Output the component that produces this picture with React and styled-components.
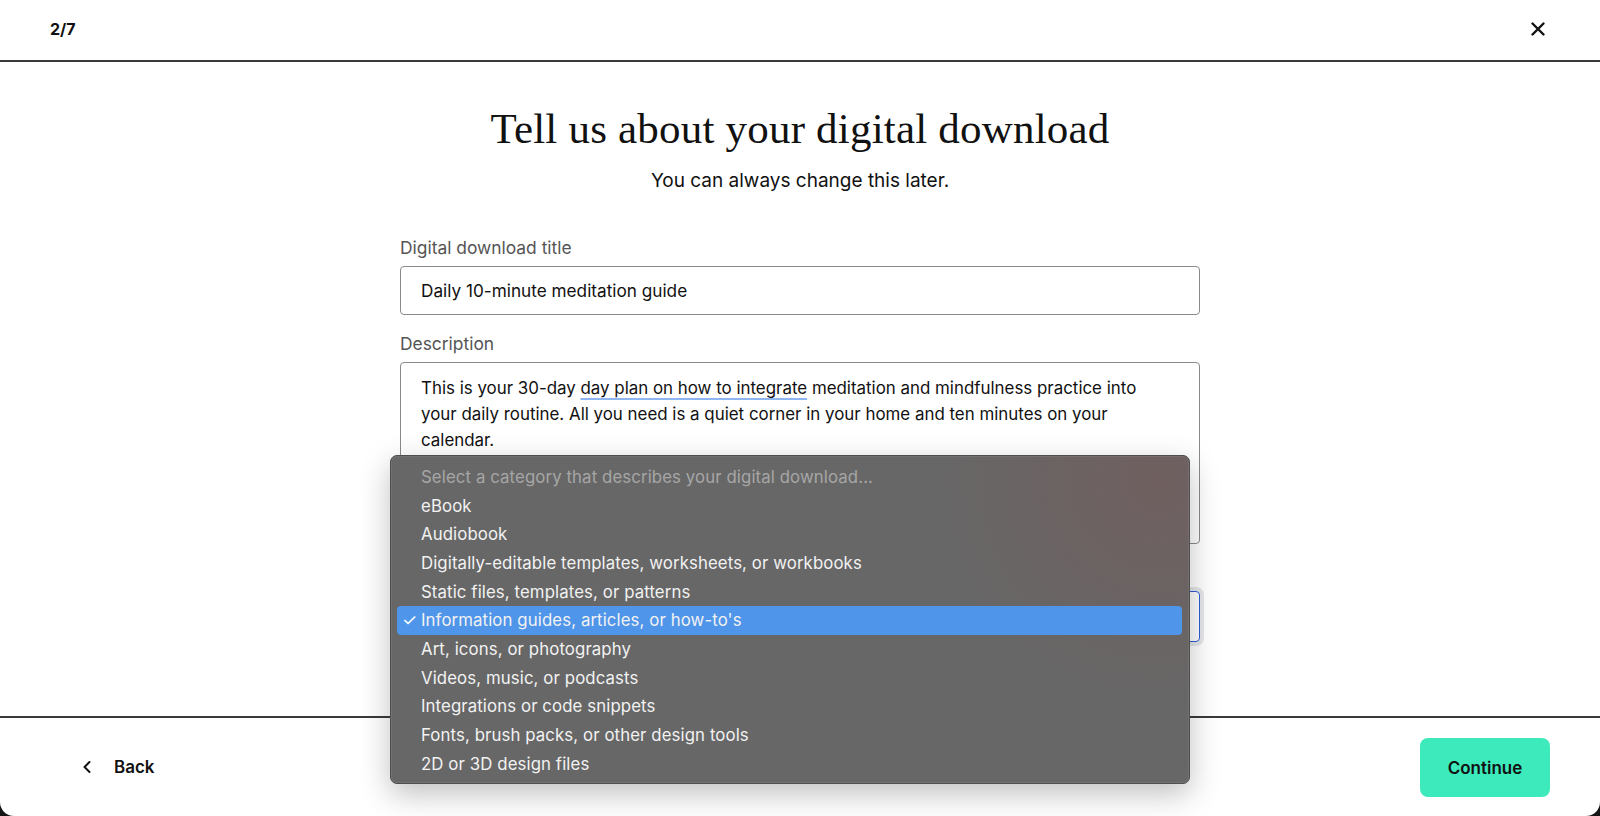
import React from 'react';
import styled, { createGlobalStyle } from 'styled-components';

const GlobalStyle = createGlobalStyle`
  * { box-sizing: border-box; }
  html, body { margin: 0; padding: 0; background: #151515; }
  body { font-family: Inter, "Noto Sans", sans-serif; color: #111; }
`;

const Modal = styled.div`
  position: relative;
  width: 1600px;
  height: 816px;
  background: #fff;
  border-radius: 0 0 14px 14px;
  display: flex;
  flex-direction: column;
  overflow: hidden;
`;

const Header = styled.header`
  height: 62px;
  flex-shrink: 0;
  border-bottom: 2px solid #3a3a3a;
  display: flex;
  align-items: center;
  justify-content: space-between;
  padding: 0 54px 0 50px;
`;

const Step = styled.span`
  font-size: 16px;
  font-weight: 700;
  margin-top: -2px;
`;

const CloseButton = styled.button`
  border: 0;
  background: none;
  padding: 0;
  width: 16px;
  height: 16px;
  display: flex;
  margin-top: -2px;
`;

const Main = styled.main`
  flex: 1;
  display: flex;
  flex-direction: column;
  align-items: center;
  padding-top: 41px;
  overflow: hidden;
`;

const Title = styled.h1`
  margin: 0;
  font-family: "Liberation Serif", "DejaVu Serif", serif;
  font-weight: 400;
  font-size: 43px;
  line-height: 52px;
  letter-spacing: 0.2px;
`;

const Subtitle = styled.p`
  margin: 13px 0 0;
  font-size: 19px;
  line-height: 26px;
`;

const FormColumn = styled.div`
  width: 800px;
  margin-top: 42px;
  display: flex;
  flex-direction: column;
  gap: 17px;
`;

const FieldGroup = styled.div`
  display: flex;
  flex-direction: column;
  gap: 6px;
`;

const Label = styled.label`
  font-size: 17.4px;
  line-height: 24px;
  color: #555;
`;

const LabelSpacer = styled.div`
  height: 24px;
`;

const TextInput = styled.div`
  height: 49px;
  border: 1px solid #8a8a8a;
  border-radius: 4px;
  padding: 0 20px;
  display: flex;
  align-items: center;
  font-size: 17.2px;
`;

const TextArea = styled.div`
  height: 182px;
  border: 1px solid #8a8a8a;
  border-radius: 4px;
  padding: 12px 20px;
  font-size: 16.9px;
  line-height: 26px;
`;

const Line = styled.span`
  display: block;
  white-space: nowrap;
`;

const Marked = styled.span`
  text-decoration: underline;
  text-decoration-color: #8db6f2;
  text-decoration-thickness: 2px;
  text-underline-offset: 4px;
`;

const SelectBox = styled.div`
  height: 51px;
  border: 1px solid #2f5fd6;
  border-radius: 4px;
  box-shadow: 0 0 0 4px #e6e7ea;
`;

const Footer = styled.footer`
  height: 100px;
  flex-shrink: 0;
  border-top: 2px solid #3a3a3a;
  display: flex;
  align-items: center;
  justify-content: space-between;
  padding: 0 50px 0 82px;
`;

const BackButton = styled.button`
  border: 0;
  background: none;
  display: flex;
  align-items: center;
  gap: 22px;
  font-family: inherit;
  font-size: 17px;
  font-weight: 600;
  color: #111;
  padding: 0;
`;

const PrimaryButton = styled.button`
  width: 130px;
  height: 59px;
  border: 0;
  border-radius: 8px;
  background: #3ceabb;
  font-family: inherit;
  font-size: 17px;
  font-weight: 600;
  color: #111;
  margin-top: 1px;
`;

const Menu = styled.div`
  position: absolute;
  left: 390px;
  top: 455px;
  width: 800px;
  height: 329px;
  border-radius: 7px;
  border: 1px solid #4e4e4e;
  background:
    radial-gradient(circle at 96% 8%, rgba(120, 88, 88, 0.5), rgba(110, 95, 95, 0) 28%),
    #676767;
  box-shadow: 0 10px 30px rgba(0, 0, 0, 0.25), inset 0 0 0 1px rgba(255, 255, 255, 0.08);
  padding: 6.5px 6px;
  font-family: Inter, "Noto Sans", sans-serif;
`;

const MenuItem = styled.div`
  position: relative;
  height: 28.7px;
  display: flex;
  align-items: center;
  padding-left: 24px;
  border-radius: 4px;
  font-size: 16.8px;
  letter-spacing: 0.1px;
  color: ${p => (p.$muted ? '#a6a6a6' : '#f2f2f2')};
  background: ${p => (p.$active ? '#4f95e9' : 'transparent')};
  margin-right: ${p => (p.$active ? '1px' : '0')};
`;

const Check = styled.span`
  position: absolute;
  left: 5px;
  top: 50%;
  transform: translateY(-52%);
  font-size: 17px;
  color: #fff;
`;

const categories = [
  'eBook',
  'Audiobook',
  'Digitally-editable templates, worksheets, or workbooks',
  'Static files, templates, or patterns',
  "Information guides, articles, or how-to's",
  'Art, icons, or photography',
  'Videos, music, or podcasts',
  'Integrations or code snippets',
  'Fonts, brush packs, or other design tools',
  '2D or 3D design files',
];

export default function App() {
  const selected = "Information guides, articles, or how-to's";
  return (
    <>
      <GlobalStyle />
      <Modal>
        <Header>
          <Step>2/7</Step>
          <CloseButton aria-label="Close">
            <svg width="16" height="16" viewBox="0 0 16 16">
              <path d="M2.5 2.5 L13.5 13.5 M13.5 2.5 L2.5 13.5" stroke="#111" strokeWidth="2.4" strokeLinecap="round" />
            </svg>
          </CloseButton>
        </Header>

        <Main>
          <Title>Tell us about your digital download</Title>
          <Subtitle>You can always change this later.</Subtitle>

          <FormColumn>
            <FieldGroup>
              <Label>Digital download title</Label>
              <TextInput>Daily 10-minute meditation guide</TextInput>
            </FieldGroup>

            <FieldGroup>
              <Label>Description</Label>
              <TextArea>
                <Line>
                  This is your 30-day <Marked>day plan on how to integrate</Marked> meditation and mindfulness practice into
                </Line>
                <Line>your daily routine. All you need is a quiet corner in your home and ten minutes on your</Line>
                <Line>calendar.</Line>
              </TextArea>
            </FieldGroup>

            <FieldGroup>
              <LabelSpacer />
              <SelectBox />
            </FieldGroup>
          </FormColumn>
        </Main>

        <Footer>
          <BackButton>
            <svg width="10" height="14" viewBox="0 0 10 14">
              <path d="M7.5 2 L2.5 7 L7.5 12" fill="none" stroke="#111" strokeWidth="2" strokeLinecap="round" strokeLinejoin="round" />
            </svg>
            Back
          </BackButton>
          <PrimaryButton>Continue</PrimaryButton>
        </Footer>

        <Menu>
          <MenuItem $muted>Select a category that describes your digital download...</MenuItem>
          {categories.map(c => (
            <MenuItem key={c} $active={c === selected}>
              {c === selected && <Check>✓</Check>}
              {c}
            </MenuItem>
          ))}
        </Menu>
      </Modal>
    </>
  );
}
